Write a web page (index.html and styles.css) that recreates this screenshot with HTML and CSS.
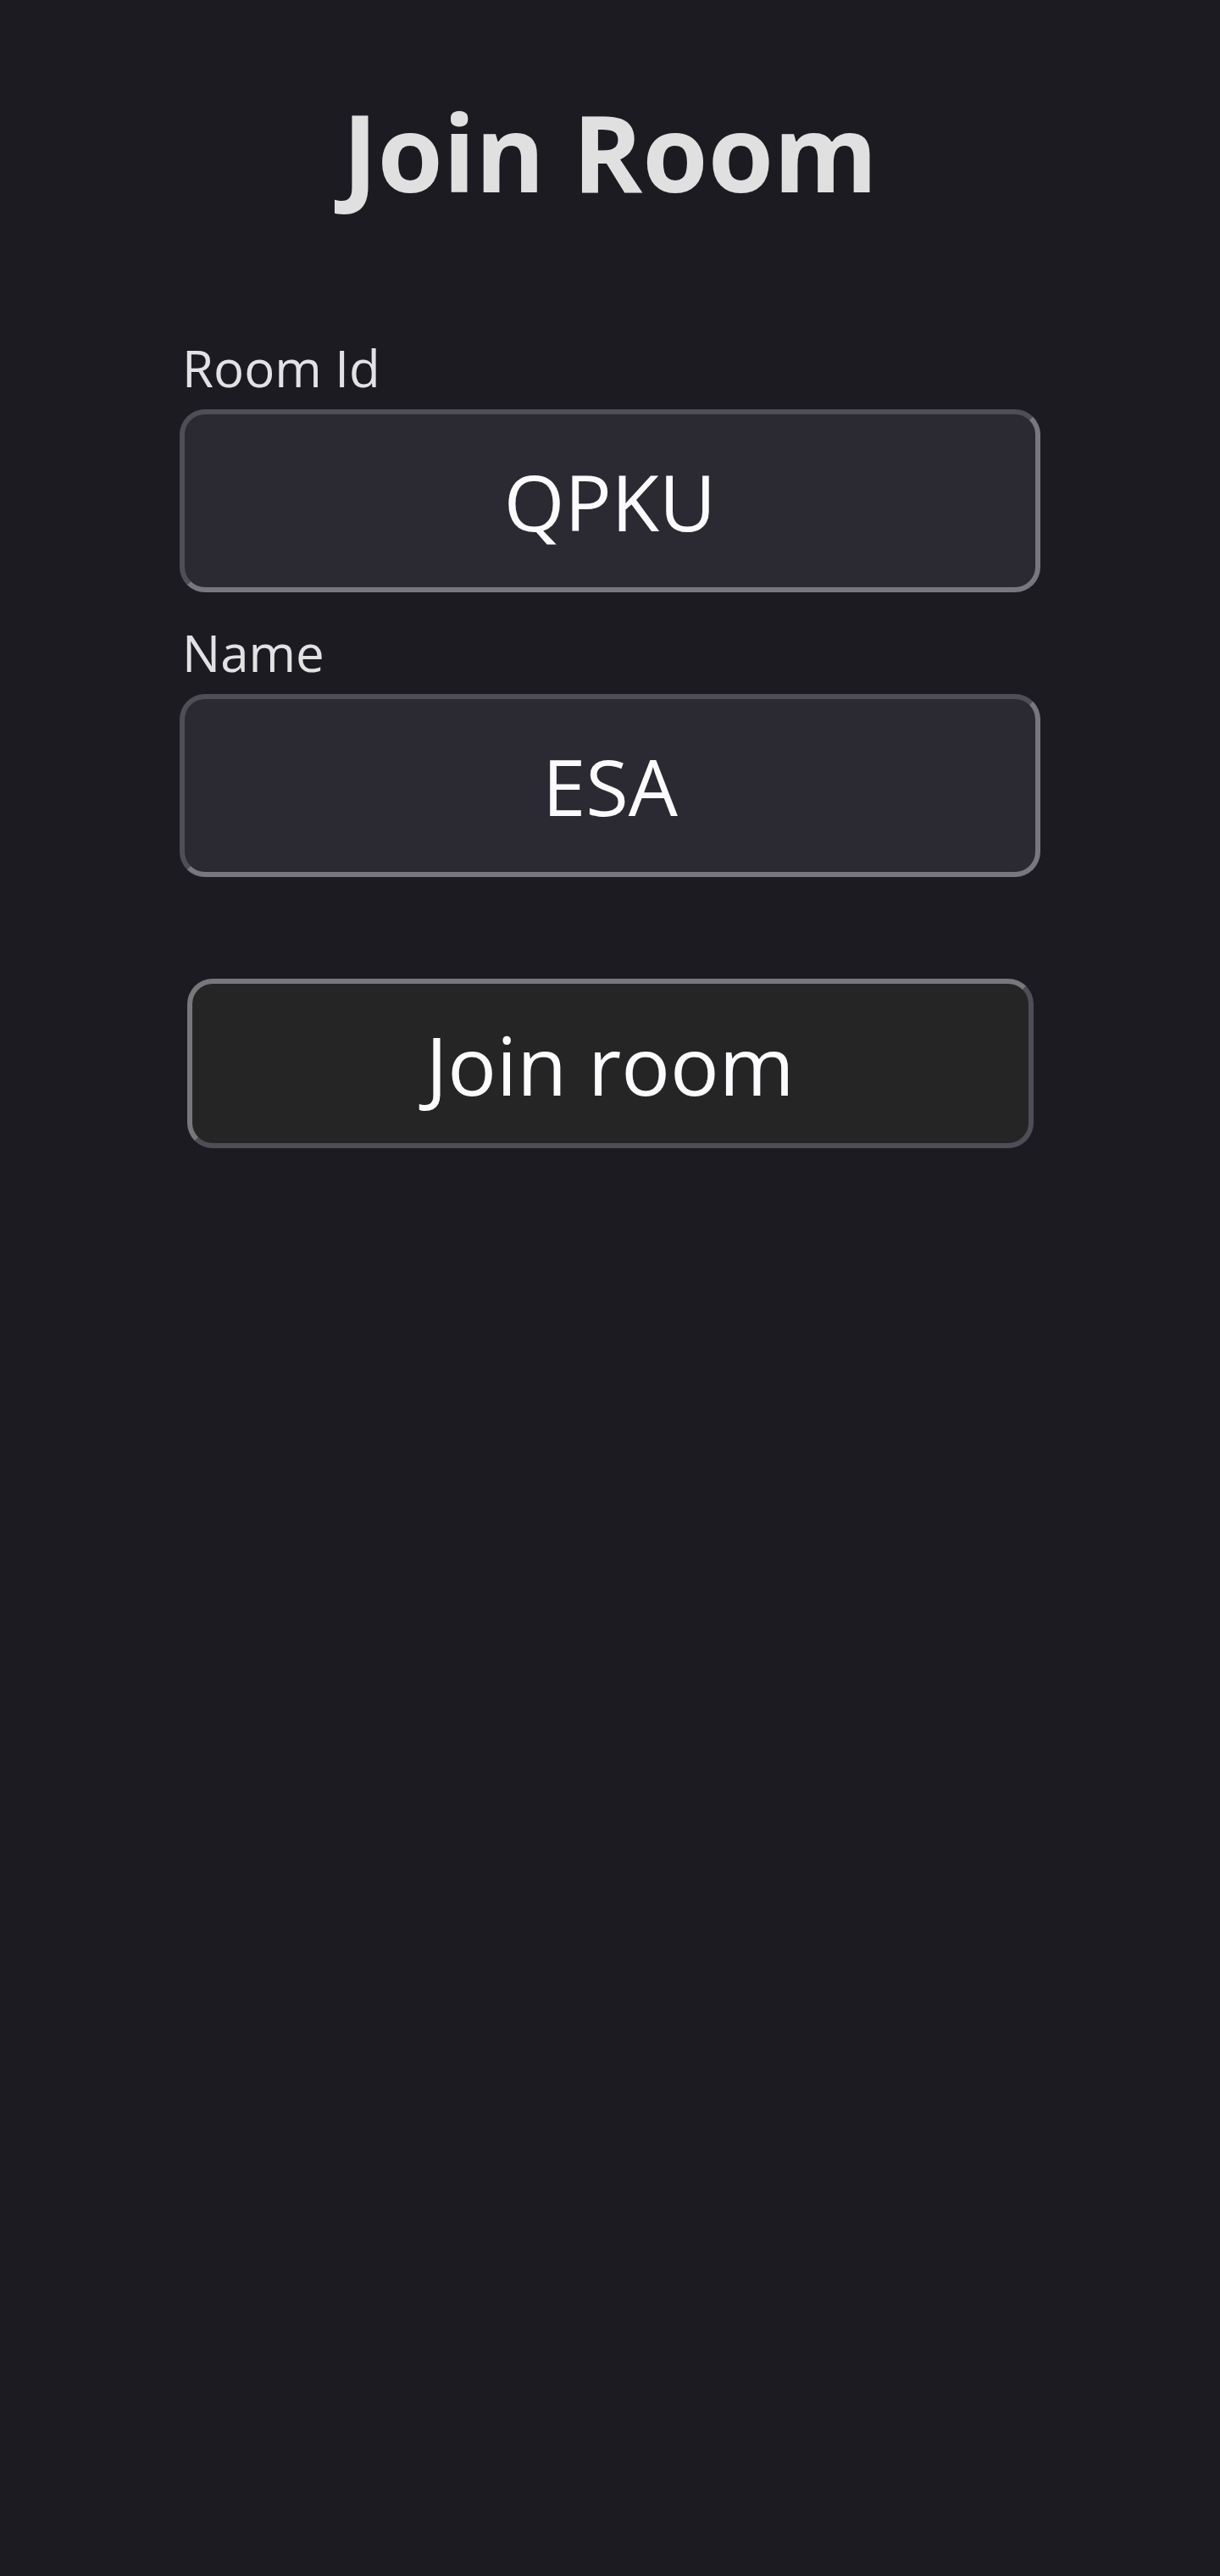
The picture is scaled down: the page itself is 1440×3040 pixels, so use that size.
FILE: index.html
```html
<!DOCTYPE html>
<html lang="en">
<head>
<meta charset="utf-8">
<title>Join Room</title>
<link rel="stylesheet" href="styles.css">
</head>
<body>
<main class="page">
  <h1 class="title">Join Room</h1>
  <form class="form">
    <label class="field">
      <span class="label">Room Id</span>
      <input class="input" type="text" value="QPKU">
    </label>
    <label class="field field-second">
      <span class="label">Name</span>
      <input class="input" type="text" value="ESA">
    </label>
    <button class="button" type="button">Join room</button>
  </form>
</main>
</body>
</html>
```

FILE: styles.css
```css
html, body {
  margin: 0;
  padding: 0;
  background: #1c1b22;
}

body {
  min-height: 3040px;
  font-family: "Open Sans", "Noto Sans", sans-serif;
  color: #e2e2e4;
}

.page {
  width: 1016px;
  margin: 0 auto;
  padding-top: 116px;
}

.title {
  margin: 0;
  font-size: 125px;
  line-height: 1;
  font-weight: 700;
  text-align: center;
  color: #e0e0e0;
}

.form {
  display: flex;
  flex-direction: column;
  margin-top: 163px;
}

.field {
  display: flex;
  flex-direction: column;
  gap: 19px;
}

.field-second {
  margin-top: 41px;
}

.label {
  font-size: 60px;
  line-height: 1;
  padding-left: 3px;
  color: #e2e2e4;
}

.input {
  box-sizing: border-box;
  width: 100%;
  height: 216px;
  margin: 0;
  padding: 0 20px;
  border: 6px solid;
  border-color: #4f4e56 #78777d #78777d #4f4e56;
  border-radius: 30px;
  background: #2b2a33;
  color: #fbfbfe;
  font-family: "Open Sans", "Noto Sans", sans-serif;
  font-size: 92px;
  text-align: center;
  outline: none;
}

.button {
  box-sizing: border-box;
  align-self: center;
  width: 999px;
  height: 200px;
  margin-top: 120px;
  padding: 0;
  border: 6px solid;
  border-color: #78777d #4f4e56 #4f4e56 #78777d;
  border-radius: 30px;
  background: #252526;
  color: #fbfbfe;
  font-family: "Open Sans", "Noto Sans", sans-serif;
  font-size: 96px;
  cursor: pointer;
}
```
